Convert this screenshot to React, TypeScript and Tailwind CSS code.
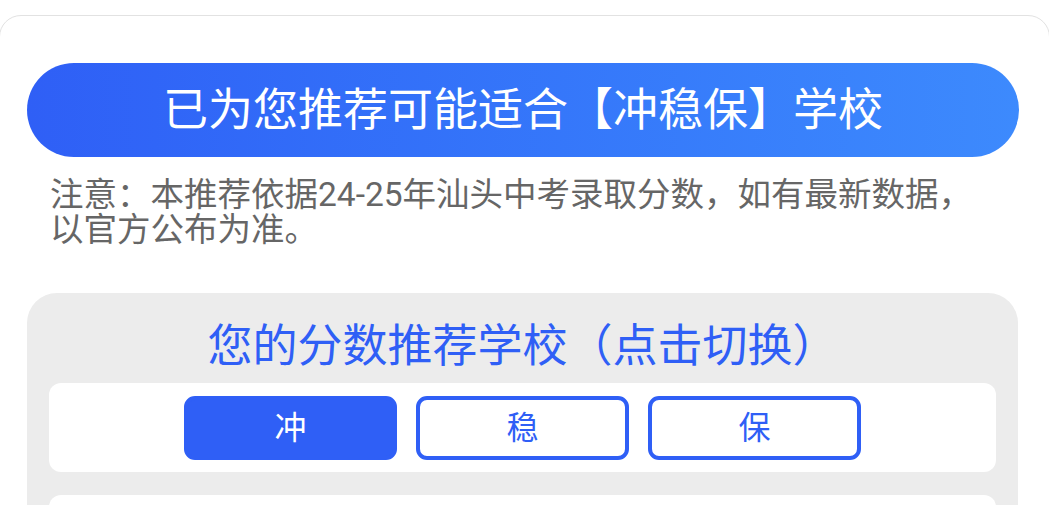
import { useState } from "react";

const LEVELS = ["冲", "稳", "保"];

export default function App() {
  const [active, setActive] = useState("冲");

  return (
    <div
      className="min-h-screen bg-white pt-[15px] overflow-hidden"
      style={{ fontFamily: 'Roboto, "Noto Sans CJK SC", sans-serif' }}
    >
      <div className="mx-[-1px] min-h-[600px] rounded-t-[22px] border border-[#e2e2e2] bg-white pt-[47px] pl-[27px] pr-[30px]">
        {/* Banner */}
        <div className="flex h-[94px] w-[992px] items-center justify-center rounded-full bg-gradient-to-r from-[#2f5ff6] to-[#3d8afd] text-[45px] leading-none text-white">
          已为您推荐可能适合【冲稳保】学校
        </div>

        {/* Notice */}
        <div className="mt-[20px] pl-[23px] text-[33.5px] leading-[35px] text-[#666666]">
          <div className="whitespace-nowrap">注意：本推荐依据24-25年汕头中考录取分数，如有最新数据，</div>
          <div className="whitespace-nowrap">以官方公布为准。</div>
        </div>

        {/* Recommend panel */}
        <div className="mt-[46px] w-[991px] rounded-t-[30px] bg-[#ececec] px-[22px] pt-[26px] pb-[22px]">
          <div className="text-center text-[45px] leading-[56px] text-[#2f5ff6]">
            您的分数推荐学校（点击切换）
          </div>
          <div className="mt-[8px] flex h-[89px] items-center justify-center gap-[19px] rounded-[12px] bg-white">
            {LEVELS.map((l) => (
              <button
                key={l}
                onClick={() => setActive(l)}
                className={`flex h-[64px] w-[213px] items-center justify-center rounded-[11px] border-[4px] border-[#2f5ff6] text-[32px] leading-none ${
                  active === l ? "bg-[#2f5ff6] text-white" : "bg-white text-[#2f5ff6]"
                }`}
              >
                {l}
              </button>
            ))}
          </div>
          <div className="mt-[23px] h-[120px] rounded-[12px] bg-white" />
        </div>
      </div>
    </div>
  );
}
